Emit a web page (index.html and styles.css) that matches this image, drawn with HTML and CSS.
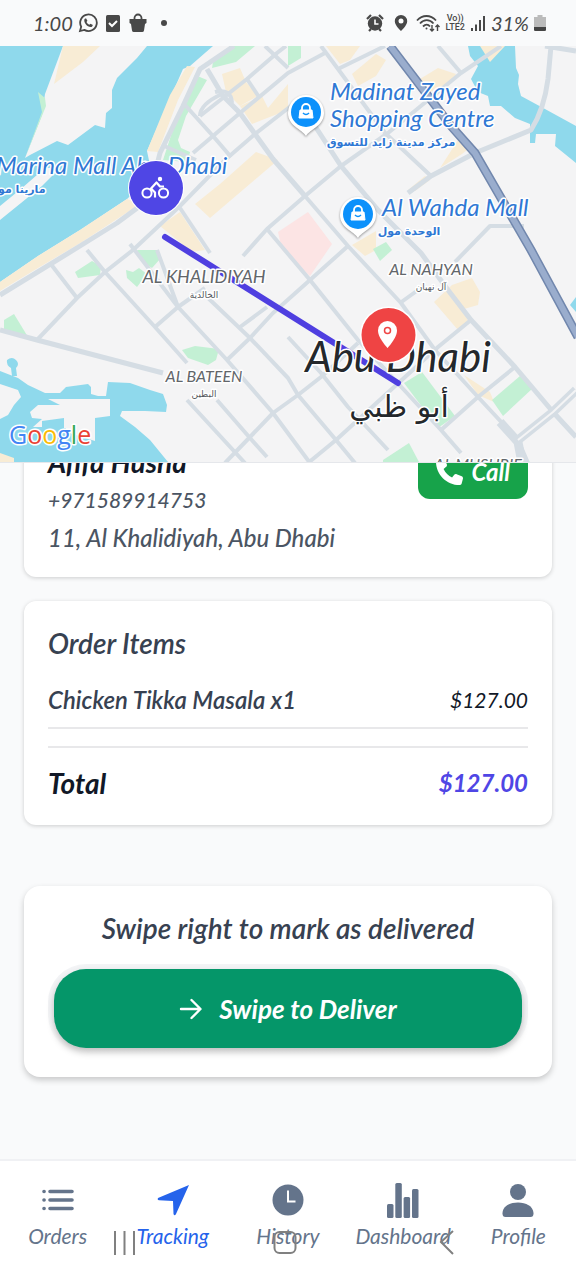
FILE: index.html
```html
<!DOCTYPE html>
<html lang="en">
<head>
<meta charset="utf-8">
<meta name="viewport" content="width=device-width, initial-scale=1">
<title>Order Tracking</title>
<link rel="stylesheet" href="styles.css">
</head>
<body>
<div class="app">
  <header class="status">
    <div class="status-group">
      <time class="clock">1:00</time>
      <svg class="status-icon" viewBox="0 0 20 20" fill="none" stroke="#484848"><path d="M2 18l1.200-4.300A8.300 8.300 0 1 1 6.300 16.900z" stroke-width="1.800"/><path d="M6.500 6l1.500-.8 1.400 2.600-.9 1.200c.8 1.400 1.600 2.100 2.800 2.700l1.200-1 2.400 1.400-.9 1.700c-3.700 1.500-8.900-3.900-7.500-7.800z" fill="#484848" stroke="none"/></svg>
      <svg class="status-icon" viewBox="0 0 20 20"><rect x="3" y="2" width="14" height="17" rx="1.500" fill="#484848"/><path d="M6 10l3 3 5-5" fill="none" stroke="#fff" stroke-width="2"/></svg>
      <svg class="status-icon" viewBox="0 0 20 20"><path d="M6.500 8V5a3.500 3.500 0 0 1 7 0v3" fill="none" stroke="#484848" stroke-width="1.800"/><path d="M1.500 6h17v4l-1.500 1-1 6.500q-.3 1.500-1.800 1.500H5.800Q4.300 19 4 17.500L3 11 1.500 10z" fill="#484848"/></svg>
      <span class="status-dot"></span>
    </div>
    <div class="status-group">
      <svg class="status-icon" viewBox="0 0 20 20" fill="#484848"><circle cx="10" cy="10.500" r="7.200"/><path d="M2 6l4-4M18 6l-4-4M4 18l2-2M16 18l-2-2" stroke="#484848" stroke-width="2.200"/><path d="M10 6.500V11h3.500" fill="none" stroke="#fff" stroke-width="1.600"/></svg>
      <svg class="status-icon pin" viewBox="0 0 14 20"><path d="M7 2a6.200 6.200 0 0 0-6.200 6.200C.8 12.500 7 18 7 18s6.200-5.500 6.200-9.800A6.200 6.200 0 0 0 7 2z" fill="#484848"/><circle cx="7" cy="8" r="2.500" fill="#fff"/></svg>
      <svg class="status-icon wifi" viewBox="0 0 24 20" fill="none" stroke="#484848" stroke-width="1.800"><path d="M1 7.500c5.500-6 13.500-6 19 0M4 10.500c4-4.500 9.500-4.500 13.500 0M7 13.500c2.500-2.500 5-2.500 7 0"/><circle cx="10.500" cy="15.500" r="1" fill="#484848" stroke="none"/><path d="M16 12v6m-2-2l2 2 2-2M21.500 18v-6m-2 2l2-2 2 2" stroke-width="1.400"/></svg>
      <span class="volte"><span>Vo))</span><span>LTE2</span></span>
      <svg class="status-icon signal" viewBox="0 0 16 20" fill="#484848"><rect x="1" y="15" width="2" height="3"/><rect x="5" y="11.500" width="2" height="6.500"/><rect x="9" y="7" width="2" height="11"/><rect x="13" y="3" width="2" height="15"/></svg>
      <span class="battery-text">31%</span>
      <svg class="status-icon battery" viewBox="0 0 12 20"><path d="M3.500 2h5v2H12v12.500a1.500 1.500 0 0 1-1.500 1.500h-9A1.500 1.500 0 0 1 0 16.500V4h3.500z" fill="#bbb"/><path d="M0 14h12v2.500a1.500 1.500 0 0 1-1.500 1.500h-9A1.500 1.500 0 0 1 0 16.500z" fill="#444"/></svg>
    </div>
  </header>

  <section class="map" aria-label="Delivery map">
    <svg class="map-canvas" viewBox="0 46 576 416">
      <rect y="46" width="576" height="416" fill="#f4f4f5"/>
      <g class="water">
        <path d="M0 46H213L190 66 183 69 147 151 152 175 127 199 80 230 38 256 0 282z"/>
        <path d="M468 46H515L516 68 519 75 518 84 521 96 545 109 576 126V163L555 146 556 134H546L536 134 535 143H530V124L515 118 501 106 490 106 488 96 478 92 471 79 478 66 470 56z"/>
        <path d="M0 371L18 378 28 385 45 393 60 393 66 387 88 384 91 387V394L98 396 106 396 108 382 130 383 150 390 163 394 167 405 166 412 145 411 122 411 120 416 135 427 150 440 168 462H0z"/>
        <path d="M7 360q5-4 9 0t0 8l1 8h-5l-1-8q-5-3-4-8z"/>
        <path d="M570 305l6-8v15z"/>
      </g>
      <g fill="#f4f4f5">
        <path d="M63 46H147L137 58 117 78 112 90V108L106 113 105 128 95 125 68 145 57 141 30 155 25 158 42 115 45 94z"/>
        <path d="M0 206L22 188 45 168 60 168 42 186 0 220z"/>
        <path d="M0 384L18 390 21 397 14 405 8 415 0 419z"/>
        <path d="M30 412L38 405 60 405 48 399H110V416L95 418V441L66 432V413L72 412V428H64V418L42 421V427H33L42 419 32 418z"/>
      </g>
      <g class="sand">
        <path d="M63 46H100L83 62 54 84z"/>
        <path d="M187 66L195 67 178 100 158 152 147 151 170 95z"/>
        <path d="M127 199L140 204 82 242 38 268 0 291V282L38 256 80 230z"/>
        <path d="M222 74L240 68 246 82 258 96 240 106 226 92z"/>
        <path d="M240 106L262 96 268 108 288 84V110L262 120 252 124z"/>
        <path d="M256 152L278 160 210 218 195 204 220 184z"/>
        <path d="M160 226L180 212 205 250 192 252z"/>
        <path d="M326 46H360L350 60 340 64z"/><path d="M352 74L376 54 386 60 376 76 358 86z"/>
        <path d="M415 82L438 68 456 74 446 90 425 92z"/><path d="M480 46H505L490 62z"/>
        <path d="M408 190L425 176 430 180 415 191zM440 168L462 154 472 146 458 140z"/>
        <path d="M352 245L376 231 376 250 365 256z"/>
        <path d="M452 285L472 278 480 292 478 305 464 309 469 324 458 330 434 302z"/>
        <path d="M464 375L490 392 494 402 478 395z"/><path d="M0 453l14 5 0 4H0z"/>
      </g>
      <path d="M278 232L308 212 332 244 310 276 282 250z" fill="#fce4e4"/>
      <g class="park">
        <path d="M213 62L230 46H255L236 62 212 68z"/><path d="M195 75L207 80 186 116 178 140 181 148 190 152 188 162 163 160 176 120z"/>
        <path d="M288 46H301V58L288 66z"/><path d="M45 98L46 106 33 138 25 158 42 112 38 92z"/>
        <path d="M75 272L92 261 101 266 100 275 78 278z"/><path d="M126 270l7 2 6-4 8 6-10 13-10-9z"/>
        <path d="M137 250H157L161 258 152 268 142 262z"/><path d="M4 320L14 314 28 337 4 329z"/>
        <path d="M182 350L195 346 219 349 216 360 208 365 188 358z"/>
        <path d="M404 383L422 372 455 416 438 428z"/><path d="M373 249L386 242 392 250 380 261z"/>
        <path d="M492 400L520 376 533 388 503 416z"/><path d="M383 460L409 443 419 462H383z"/>
      </g>
      <g class="roads">
        <path d="M234 46L200 69 183 106 160 153 148 200 117 223 80 246 0 295" class="wide"/>
        <path d="M300 99L255 134 225 160 180 206 133 250 105 272 77 298 37 340"/>
        <path d="M325 53L288 73 240 113 213 136 193 153"/>
        <path d="M200 116L247 79 277 53 286 46"/><path d="M265 46L288 68M247 79L259 97M222 94Q200 104 200 116"/>
        <path d="M207 69L223 96 240 113 255 134 273 159 305 196" class="wide"/>
        <path d="M215 92Q231 88 232 103M185 105L213 136 231 157M162 145L196 160"/>
        <path d="M305 196L348 246 401 303 435 350 478 397 518 440 528 463"/>
        <path d="M315 126L341 166 378 210 421 253 448 290 471 320 515 367 553 412 576 437" class="wide"/>
        <path d="M243 256L267 229 305 196 341 166 388 133 461 73 501 46"/>
        <path d="M321 46L338 69 385 133 431 176M338 69L385 46M438 46L461 73"/>
        <path d="M408 193L431 176 475 153 531 130Q544 110 548 79L551 46M545 46L576 51" class="wide"/>
        <path d="M180 208L210 253 M157 250L178 307 M130 244L178 307 227 360 273 413 310 463"/>
        <path d="M87 250L105 272 155 327 187 363M187 400L245 463M217 400L250 438 267 457"/>
        <path d="M155 327L178 307 205 288 M50 263L77 298"/>
        <path d="M0 330L37 340 163 373" class="wide"/>
        <path d="M207 297L250 338 288 378 298 395 336 440 355 463"/>
        <path d="M227 360L250 338 273 313 310 280 348 246 M240 327L267 307"/>
        <path d="M225 463L250 437 273 413 298 395 321 377 358 343"/>
        <path d="M267 229L310 280 358 340 441 430 461 453"/>
        <path d="M308 463L336 440 371 408 438 347 471 320"/>
        <path d="M441 430L478 397 515 367M288 337L321 373 348 407 388 450"/>
        <path d="M518 440L553 412 576 390" class="avenue"/><path d="M500 422L518 442 522 463" class="avenue"/>
        <path d="M518 440L553 412 576 390" stroke="#f4f4f5" stroke-width="2"/>
        <path d="M455 262L490 226H524M400 303L425 285"/>
      </g>
      <path d="M390 46L451 126 475 153 531 250 578 337" fill="none" stroke="#7187ad" stroke-width="9"/>
      <path d="M390 46L451 126 475 153 531 250 578 337" fill="none" stroke="#9aadcd" stroke-width="6"/>

      <path d="M165 237L398 383" stroke="#4f3fe0" stroke-width="6" stroke-linecap="round"/>

      <g class="poi">
        <text x="-4" y="174">Marina Mall Abu Dhabi</text><text x="330" y="100">Madinat Zayed</text><text x="330" y="127">Shopping Centre</text><text x="382" y="216">Al Wahda Mall</text>
      </g>
      <g class="poi-ar">
        <text x="17" y="193" text-anchor="middle">مارينا مول</text><text x="391" y="146" text-anchor="middle">مركز مدينة زايد للتسوق</text><text x="409" y="235" text-anchor="middle">الوحدة مول</text>
      </g>
      <g class="area" text-anchor="middle">
        <text x="204" y="283" class="area-large">AL KHALIDIYAH</text><text x="204" y="382">AL BATEEN</text><text x="431" y="275">AL NAHYAN</text><text x="478" y="470">AL MUSHRIF</text>
      </g>
      <g class="area-ar" text-anchor="middle">
        <text x="204" y="298">الخالدية</text><text x="204" y="397">البطين</text><text x="431" y="290">آل نهيان</text>
      </g>
      <text x="398" y="372" class="city" text-anchor="middle">Abu Dhabi</text>
      <text x="399" y="417" class="city-ar" text-anchor="middle">أبو ظبي</text>
      <text x="9" y="444" class="google"><tspan fill="#4285f4">G</tspan><tspan fill="#ea4335">o</tspan><tspan fill="#fbbc05">o</tspan><tspan fill="#4285f4">g</tspan><tspan fill="#34a853">l</tspan><tspan fill="#ea4335">e</tspan></text>

      <g id="shop">
        <path d="M306 95a18 18 0 0 0-18 18c0 13 14 16 18 23 4-7 18-10 18-23a18 18 0 0 0-18-18z" fill="#fff" class="pin-shadow"/>
        <circle cx="306" cy="112" r="15" fill="#0c91fb"/>
        <path d="M300 110h12l1 8h-14z" fill="#fff" stroke="#fff"/><path d="M302 110v-2a4 4 0 0 1 8 0v2" fill="none" stroke="#fff" stroke-width="1.800"/><path d="M303 113q3 3 6 0" fill="none" stroke="#0c91fb" stroke-width="1.500"/>
      </g>
      <use href="#shop" x="52" y="102"/>

      <circle cx="156" cy="188" r="28" fill="#fff"/><circle cx="156" cy="188" r="27" fill="#4f46e5"/>
      <g fill="none" stroke="#fff" stroke-width="2"><circle cx="147" cy="193" r="4.600"/><circle cx="163.500" cy="193" r="4.600"/><path d="M155 197.500V192.500L151 188.500 156.500 182.500 160 186.500H164" stroke-width="2.200" stroke-linejoin="round"/><circle cx="160" cy="179" r="1.200" fill="#fff"/></g>
      <circle cx="388.500" cy="335" r="28.500" fill="#fff"/><circle cx="388.500" cy="335" r="27" fill="#ef4444"/>
      <path d="M387.500 321a9.500 9.500 0 0 0-9.500 9.500c0 7.500 9.500 17.500 9.500 17.500s9.500-10 9.500-17.500a9.500 9.500 0 0 0-9.500-9.500z" fill="#fff"/><circle cx="387.500" cy="330.500" r="3" fill="none" stroke="#ef4444" stroke-width="1.500"/>
    </svg>
  </section>

  <main class="content">
    <section class="card customer">
      <div class="customer-info">
        <h2 class="name">Afifa Husna</h2>
        <p class="detail">+971589914753</p>
        <p class="detail address">11, Al Khalidiyah, Abu Dhabi</p>
      </div>
      <button class="call" type="button">
        <svg class="call-icon" viewBox="0 0 512 512" fill="#fff"><path d="M164.900 24.600c-7.700-18.600-28-28.500-47.400-23.200l-88 24C12.100 30.200 0 46 0 64c0 247.400 200.600 448 448 448 18 0 33.800-12.100 38.600-29.500l24-88c5.300-19.400-4.600-39.700-23.200-47.400l-96-40c-16.300-6.800-35.200-2.100-46.300 11.600L304.700 368C234.300 334.700 177.300 277.700 144 207.300L193.300 167c13.700-11.200 18.400-30 11.600-46.300z"/></svg>
        Call
      </button>
    </section>

    <section class="card">
      <h2 class="heading">Order Items</h2>
      <div class="item"><span>Chicken Tikka Masala x1</span><span class="price">$127.00</span></div>
      <div class="total"><span>Total</span><span class="total-price">$127.00</span></div>
    </section>

    <section class="card deliver">
      <h2 class="hint">Swipe right to mark as delivered</h2>
      <div class="track">
        <button class="swipe" type="button">
          <svg class="arrow" viewBox="0 0 24 24" fill="none" stroke="#fff" stroke-width="2.400" stroke-linecap="round" stroke-linejoin="round"><path d="M2 12H21M12.500 3L21.500 12 12.500 21"/></svg>
          Swipe to Deliver
        </button>
      </div>
    </section>
  </main>

  <nav class="tabs">
    <a class="tab" href="#orders"><svg class="tab-icon" viewBox="0 0 36 36" fill="none" stroke="currentColor" stroke-width="3.600" stroke-linecap="round"><path d="M10 9.500H32M10 18H32M10 26.500H32M4 9.500h.1M4 18h.1M4 26.500h.1" /></svg>Orders</a>
    <a class="tab active" href="#tracking"><svg class="tab-icon" viewBox="0 0 36 36" fill="currentColor"><path d="M34 3L3 16q-1 2 1 2.200L18 19 18.500 32q1 2.500 2.500 0z"/></svg>Tracking</a>
    <a class="tab" href="#history"><svg class="tab-icon" viewBox="0 0 36 36"><circle cx="18" cy="18" r="15.500" fill="currentColor"/><path d="M18 8.500V19.500H25.500" fill="none" stroke="#fff" stroke-width="2"/></svg>History</a>
    <a class="tab" href="#dashboard"><svg class="tab-icon" viewBox="0 0 36 36" fill="currentColor"><rect x="2" y="22" width="6.500" height="14" rx="1.500"/><rect x="10.300" y="1" width="6.500" height="35" rx="1.500"/><rect x="18.600" y="15" width="6.500" height="21" rx="1.500"/><rect x="27" y="7" width="6.500" height="29" rx="1.500"/></svg>Dashboard</a>
    <a class="tab" href="#profile"><svg class="tab-icon" viewBox="0 0 36 36" fill="currentColor"><circle cx="18" cy="10" r="8"/><path d="M2.500 31C3 24 10 20.500 18 20.500S33 24 33.500 31q.2 4-3 4h-25q-3.200 0-3-4z"/></svg>Profile</a>
    <div class="system-keys" aria-hidden="true">
      <svg viewBox="0 0 24 26"><path d="M3 1V25M12.500 1V25M22 1V25"/></svg>
      <svg viewBox="0 0 24 26"><rect x="1.500" y="2" width="21" height="21" rx="5"/></svg>
      <svg viewBox="0 0 24 26"><path d="M19 1L7 12 19 24"/></svg>
    </div>
  </nav>
</div>
</body>
</html>
```
FILE: styles.css
```css
* { box-sizing: border-box; }

body {
  margin: 0;
  background: #f9fafb;
  color: #111827;
  font-family: Lato, "Noto Sans", sans-serif;
  font-style: italic;
}

h2, p { margin: 0; }

button {
  border: 0;
  color: #fff;
  font: inherit;
  font-weight: 700;
  cursor: pointer;
}

.app {
  display: flex;
  flex-direction: column;
  min-height: 100vh;
}

.status {
  display: flex;
  justify-content: space-between;
  height: 46px;
  padding: 0 30px 0 33px;
  color: #484848;
}

.status-group {
  display: flex;
  align-items: center;
  gap: 5px;
}

.clock, .battery-text { font-size: 20px; }
.status-icon { width: 20px; height: 20px; }
.status-icon.pin { width: 16px; margin-left: 3px; }
.status-icon.wifi { width: 24px; margin-left: 2px; }
.status-icon.signal { width: 16px; }
.status-icon.battery { width: 12px; }
.status-dot { width: 6px; height: 6px; margin-left: 8px; border-radius: 50%; background: #484848; }

.volte {
  display: flex;
  flex-direction: column;
  align-items: center;
  font: 500 9px/9px Roboto, sans-serif;
}

.map {
  position: relative;
  z-index: 1;
  border-bottom: 1px solid #e5e7eb;
}

.map-canvas { display: block; width: 100%; }
.map-canvas text { paint-order: stroke; stroke: #fff; stroke-width: 3px; stroke-linejoin: round; }
.water { fill: #8fd9ec; }
.sand { fill: #f8ecd5; }
.park { fill: #c3f0d4; }
.roads { fill: none; stroke: #d5dde4; stroke-width: 4; stroke-linejoin: round; }
.roads .wide { stroke-width: 5; }
.roads .avenue { stroke-width: 9; }
.poi { fill: #2f78d4; font-size: 24px; }
.poi-ar { fill: #2f78d4; font: 700 11px "DejaVu Sans", sans-serif; }
.area { fill: #62666a; font-size: 16px; }
.area-large { font-size: 18px; }
.area-ar { fill: #55595d; font: 9px "DejaVu Sans", sans-serif; }
.city { fill: #24282c; font-size: 42px; }
.city-ar { fill: #24282c; font: 30px "DejaVu Sans", sans-serif; }
.google { font: 500 25px "Open Sans", sans-serif; }
.pin-shadow { filter: drop-shadow(0 1px 1px #0006); }

.content {
  display: flex;
  flex-direction: column;
  gap: 24px;
  padding: 0 24px 24px;
}

.card {
  padding: 24px;
  border-radius: 12px;
  background: #fff;
  box-shadow: 0 1px 4px #0000002e;
}

.customer {
  display: flex;
  justify-content: space-between;
  align-items: flex-start;
  margin-top: -40px;
  padding: 20px 24px;
}

.name, .detail { line-height: 38px; }
.name { font-size: 28px; }
.detail { color: #4b5563; font-size: 21px; font-weight: 500; }
.address { font-size: 24px; }

.call {
  display: flex;
  align-items: center;
  gap: 8px;
  height: 56px;
  padding: 0 18px;
  border-radius: 12px;
  background: #17a34a;
  font-size: 24px;
}

.call-icon { width: 27px; height: 27px; }

.heading, .hint { color: #374151; line-height: 36px; font-weight: 600; }
.heading, .hint { font-size: 28px; }
.hint { text-align: center; }

.item, .total {
  display: flex;
  justify-content: space-between;
}

.item {
  margin-top: 20px;
  padding-bottom: 8px;
  border-bottom: 2px solid #e8e8ea;
  color: #374151;
  font-size: 24px;
  font-weight: 600;
  line-height: 38px;
}

.price { color: #111827; font-size: 21px; font-weight: 400; }

.total {
  margin-top: 17px;
  padding-top: 17px;
  border-top: 2px solid #e8e8ea;
  font-size: 28px;
  font-weight: 700;
  line-height: 36px;
}

.total-price { color: #4f46e5; font-size: 24px; font-weight: 700; }

.deliver {
  margin-top: 37px;
  border-radius: 16px;
  box-shadow: 0 3px 6px #00000033;
}

.track {
  margin-top: 18px;
  padding: 5px 6px;
  border-radius: 38px;
  background: linear-gradient(#f3f4f6 50%, #fff);
}

.swipe {
  display: flex;
  justify-content: center;
  align-items: center;
  gap: 16px;
  width: 100%;
  height: 79px;
  border-radius: 32px;
  background: #059669;
  box-shadow: 0 4px 7px #00000040;
  font-size: 26px;
}

.arrow { width: 24px; height: 24px; }

.tabs {
  position: relative;
  display: grid;
  grid-template-columns: repeat(5, 1fr);
  margin-top: auto;
  padding: 21px 0 30px;
  border-top: 2px solid #f0f1f4;
  background: #fff;
}

.tab {
  display: flex;
  flex-direction: column;
  align-items: center;
  gap: 4px;
  color: #64748b;
  font-size: 21px;
  line-height: 28px;
  text-decoration: none;
}

.tab.active { color: #2563eb; }
.tab-icon { width: 36px; height: 36px; }

.system-keys {
  position: absolute;
  right: 118px;
  bottom: 24px;
  left: 112px;
  display: flex;
  justify-content: space-between;
  pointer-events: none;
}

.system-keys svg {
  width: 24px;
  height: 26px;
  fill: none;
  stroke: #808080;
  stroke-width: 2;
}
```
